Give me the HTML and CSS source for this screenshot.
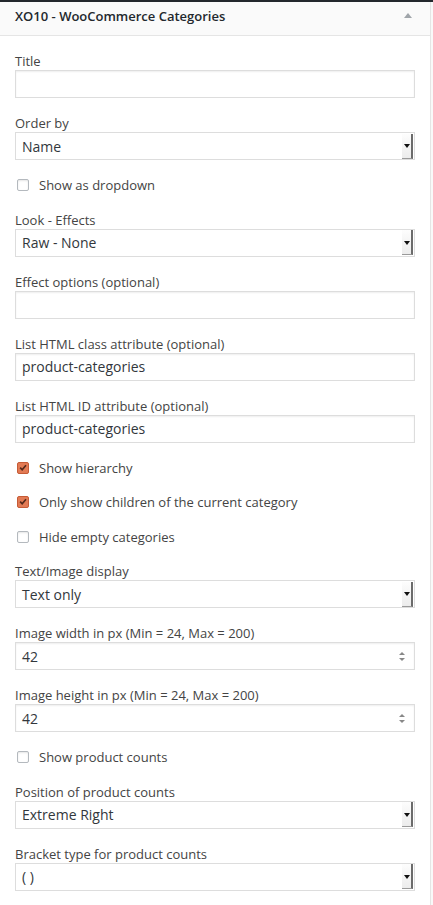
FILE: index.html
```html
<!DOCTYPE html>
<html lang="en">
<head>
    <meta charset="UTF-8">
    <meta name="viewport" content="width=device-width, initial-scale=1.0">
    <title>XO10 - WooCommerce Categories</title>
    <link rel="stylesheet" href="styles.css">
</head>
<body>
    <div class="adminbar"></div>

    <div class="widget">
        <div class="widget-top">
            <h3>XO10 - WooCommerce Categories</h3>
            <span class="toggle"></span>
        </div>

        <div class="widget-inside">
            <div class="field">
                <label>Title</label>
                <div class="input"></div>
            </div>

            <div class="field">
                <label>Order by</label>
                <div class="select"><span class="value">Name</span><span class="btn"><i></i></span></div>
            </div>

            <div class="check">
                <span class="box"></span>
                <span>Show as dropdown</span>
            </div>

            <div class="field">
                <label>Look - Effects</label>
                <div class="select"><span class="value">Raw - None</span><span class="btn"><i></i></span></div>
            </div>

            <div class="field">
                <label>Effect options (optional)</label>
                <div class="input"></div>
            </div>

            <div class="field">
                <label>List HTML class attribute (optional)</label>
                <div class="input">product-categories</div>
            </div>

            <div class="field">
                <label>List HTML ID attribute (optional)</label>
                <div class="input">product-categories</div>
            </div>

            <div class="check">
                <span class="box checked"><svg viewBox="0 0 12 12"><path d="M2.6 5.6 L5 8.2 L9.6 2.6" /></svg></span>
                <span>Show hierarchy</span>
            </div>

            <div class="check">
                <span class="box checked"><svg viewBox="0 0 12 12"><path d="M2.6 5.6 L5 8.2 L9.6 2.6" /></svg></span>
                <span>Only show children of the current category</span>
            </div>

            <div class="check">
                <span class="box"></span>
                <span>Hide empty categories</span>
            </div>

            <div class="field">
                <label>Text/Image display</label>
                <div class="select"><span class="value">Text only</span><span class="btn"><i></i></span></div>
            </div>

            <div class="field">
                <label>Image width in px (Min = 24, Max = 200)</label>
                <div class="input number"><span class="value">42</span><span class="spin"><i class="up"></i><i class="down"></i></span></div>
            </div>

            <div class="field">
                <label>Image height in px (Min = 24, Max = 200)</label>
                <div class="input number"><span class="value">42</span><span class="spin"><i class="up"></i><i class="down"></i></span></div>
            </div>

            <div class="check">
                <span class="box"></span>
                <span>Show product counts</span>
            </div>

            <div class="field">
                <label>Position of product counts</label>
                <div class="select"><span class="value">Extreme Right</span><span class="btn"><i></i></span></div>
            </div>

            <div class="field">
                <label>Bracket type for product counts</label>
                <div class="select"><span class="value">( )</span><span class="btn"><i></i></span></div>
            </div>
        </div>
    </div>
</body>
</html>
```

FILE: styles.css
```css
body {
    margin: 0;
    background: #f9f9f9;
    font-family: "Open Sans", Arial, sans-serif;
    color: #444;
}
.adminbar {
    height: 2px;
    background: #23282d;
}
.widget {
    width: 431px;
    background: #fff;
    border-right: 1px solid #e5e5e5;
    box-sizing: border-box;
}
.widget-top {
    display: flex;
    justify-content: space-between;
    height: 34px;
    padding: 5px 15px 0 15px;
    background: #fafafa;
    border-bottom: 1px solid #e5e5e5;
    box-sizing: border-box;
}
.widget-top h3 {
    margin: 0;
    font-size: 13px;
    line-height: 14px;
    font-weight: 600;
    color: #23282d;
    padding-top: 2px;
}
.toggle {
    width: 0;
    height: 0;
    margin: 6px 3px 0 0;
    border-left: 4px solid transparent;
    border-right: 4px solid transparent;
    border-bottom: 5px solid #a0a5aa;
}
.widget-inside {
    display: flex;
    flex-direction: column;
    gap: 16px;
    padding: 16px 15px 20px 15px;
}
.field label {
    display: block;
    font-size: 13px;
    line-height: 18px;
    color: #444;
}
.input, .select {
    display: flex;
    align-items: center;
    height: 28px;
    border: 1px solid #ddd;
    box-shadow: inset 0 1px 2px rgba(0,0,0,0.07);
    background: #fff;
    box-sizing: border-box;
    padding-left: 6px;
    font-size: 14px;
    color: #32373c;
}
.select {
    box-shadow: none;
    padding-right: 1px;
}
.value {
    flex: 1;
}
.select .btn {
    display: flex;
    align-items: center;
    justify-content: center;
    width: 11px;
    height: 25px;
    background: linear-gradient(#fdfdfd, #ececec);
    border-right: 2px solid #6b6b6b;
    border-bottom: 1px solid #9a9a9a;
    box-sizing: border-box;
}
.select .btn i {
    width: 0;
    height: 0;
    margin-top: 1px;
    border-left: 3px solid transparent;
    border-right: 3px solid transparent;
    border-top: 4px solid #111;
}
.number .spin {
    display: flex;
    flex-direction: column;
    gap: 3px;
    margin-right: 9px;
}
.spin i {
    width: 0;
    height: 0;
    border-left: 3px solid transparent;
    border-right: 3px solid transparent;
}
.spin .up {
    border-bottom: 3px solid #888;
}
.spin .down {
    border-top: 3px solid #888;
}
.check {
    display: flex;
    align-items: center;
    gap: 10px;
    height: 18.5px;
    padding-left: 2px;
    font-size: 13px;
    color: #444;
}
.box {
    display: flex;
    width: 12px;
    height: 12px;
    border: 1px solid #b4b9be;
    border-radius: 2px;
    background: #fff;
    box-shadow: inset 0 1px 2px rgba(0,0,0,0.1);
    box-sizing: border-box;
}
.box.checked {
    background: #e27a54;
    border-color: #c65b36;
    box-shadow: none;
}
.box svg {
    width: 10px;
    height: 10px;
}
.box path {
    fill: none;
    stroke: #55291a;
    stroke-width: 2;
}
```
